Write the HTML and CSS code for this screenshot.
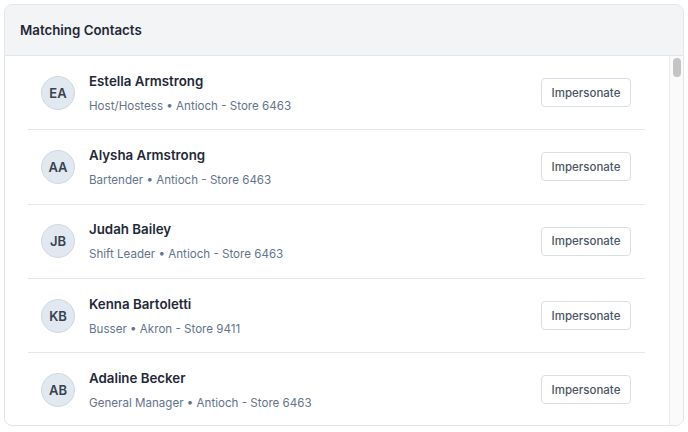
FILE: index.html
```html
<!DOCTYPE html>
<html lang="en">
  <head>
    <meta charset="UTF-8" />
    <meta name="viewport" content="width=device-width, initial-scale=1.0" />
    <title>Matching Contacts</title>
    <link rel="stylesheet" href="styles.css">
  </head>
  <body>
    <!-- Contacts Card -->
    <div class="card">
      <div class="card-header">Matching Contacts</div>

      <div class="card-body">
        <ul class="contact-list">
          <li class="contact">
            <div class="avatar">EA</div>
            <div class="contact-info">
              <div class="contact-name">Estella Armstrong</div>
              <div class="contact-meta">Host/Hostess &bull; Antioch - Store 6463</div>
            </div>
            <button class="btn-impersonate">Impersonate</button>
          </li>
          <li class="contact">
            <div class="avatar">AA</div>
            <div class="contact-info">
              <div class="contact-name">Alysha Armstrong</div>
              <div class="contact-meta">Bartender &bull; Antioch - Store 6463</div>
            </div>
            <button class="btn-impersonate">Impersonate</button>
          </li>
          <li class="contact">
            <div class="avatar">JB</div>
            <div class="contact-info">
              <div class="contact-name">Judah Bailey</div>
              <div class="contact-meta">Shift Leader &bull; Antioch - Store 6463</div>
            </div>
            <button class="btn-impersonate">Impersonate</button>
          </li>
          <li class="contact">
            <div class="avatar">KB</div>
            <div class="contact-info">
              <div class="contact-name">Kenna Bartoletti</div>
              <div class="contact-meta">Busser &bull; Akron - Store 9411</div>
            </div>
            <button class="btn-impersonate">Impersonate</button>
          </li>
          <li class="contact">
            <div class="avatar">AB</div>
            <div class="contact-info">
              <div class="contact-name">Adaline Becker</div>
              <div class="contact-meta">General Manager &bull; Antioch - Store 6463</div>
            </div>
            <button class="btn-impersonate">Impersonate</button>
          </li>
        </ul>

        <!-- Scrollbar -->
        <div class="scrollbar">
          <div class="scrollbar-thumb"></div>
        </div>
      </div>
    </div>
  </body>
</html>
```

FILE: styles.css
```css
/* Global Styles */
* {
  box-sizing: border-box;
}

body {
  font-family: "Inter", "Noto Sans", sans-serif;
  background-color: #ffffff;
  margin: 0;
  padding: 4px;
  color: #111827;
}

/* Card */
.card {
  height: 422px;
  border: 1px solid #e3e5e9;
  border-radius: 8px;
  overflow: hidden;
  display: flex;
  flex-direction: column;
  background-color: #ffffff;
}

.card-header {
  height: 51px;
  flex-shrink: 0;
  display: flex;
  align-items: center;
  padding: 0 15px;
  background-color: #f3f4f6;
  border-bottom: 1px solid #e3e5e9;
  font-size: 13.3px;
  font-weight: 600;
  color: #1f2937;
}

.card-body {
  flex: 1;
  display: flex;
  min-height: 0;
}

/* Contact List */
.contact-list {
  flex: 1;
  list-style: none;
  margin: 0;
  padding: 0 24px 0 23px;
  overflow: hidden;
}

.contact {
  height: 74.3px;
  display: flex;
  align-items: center;
  padding: 0 14px 0 13px;
  border-bottom: 1px solid #e5e7eb;
}

.avatar {
  width: 34px;
  height: 34px;
  flex-shrink: 0;
  border-radius: 50%;
  background-color: #e2e8f0;
  border: 1px solid #cfd8e3;
  display: flex;
  align-items: center;
  justify-content: center;
  font-size: 13px;
  font-weight: 600;
  color: #374151;
}

.contact-info {
  flex: 1;
  margin-left: 14px;
}

.contact-name {
  font-size: 13.3px;
  font-weight: 600;
  line-height: 20px;
  color: #1f2937;
}

.contact-meta {
  font-size: 11.6px;
  line-height: 18px;
  margin-top: 6px;
  color: #64748b;
}

.btn-impersonate {
  font-family: "Inter", "Noto Sans", sans-serif;
  width: 90px;
  height: 29px;
  font-size: 11.5px;
  font-weight: 500;
  color: #4b5563;
  background-color: #ffffff;
  border: 1px solid #d9dee6;
  border-radius: 4px;
  cursor: pointer;
}

/* Scrollbar */
.scrollbar {
  width: 14px;
  flex-shrink: 0;
  background-color: #fafafa;
  border-left: 1px solid #ececec;
  padding: 2px 2px 0 3px;
}

.scrollbar-thumb {
  height: 19px;
  width: 8px;
  border-radius: 4px;
  background-color: #c4c4c4;
}
```
